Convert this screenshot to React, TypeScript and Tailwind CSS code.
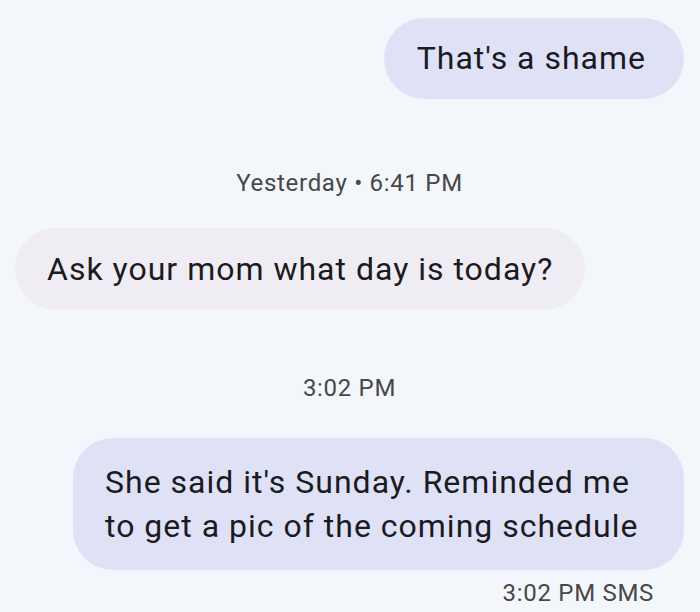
const font = { fontFamily: 'Roboto, "Noto Sans", sans-serif' };

function Stamp({ children, className = '' }: { children: React.ReactNode; className?: string }) {
  return (
    <div className={`text-[24px] leading-[28px] tracking-[0.7px] text-[#474747] ${className}`}>{children}</div>
  );
}

export default function App() {
  return (
    <div style={font} className="w-[700px] h-[612px] bg-[#f3f7fc] overflow-hidden flex flex-col pt-[18px] pl-[15px] pr-[16px] text-[#1b1b1f]">
      <div className="self-end rounded-full bg-[#dfe2f7] pl-[33px] pr-[38px] py-[18px] text-[32px] leading-[45px] tracking-[1px]">
        That's a shame
      </div>

      <Stamp className="self-center mt-[70px]">Yesterday • 6:41 PM</Stamp>

      <div className="self-start mt-[31px] rounded-full bg-[#efedf3] px-[32px] py-[18px] text-[32px] leading-[46px] tracking-[1px]">
        Ask your mom what day is today?
      </div>

      <Stamp className="self-center mt-[64px]">3:02 PM</Stamp>

      <div className="self-end mt-[36px] w-[611px] rounded-[40px] bg-[#dfe2f7] px-[32px] py-[22px] text-[32px] leading-[44px] tracking-[1px]">
        She said it's Sunday. Reminded me to get a pic of the coming schedule
      </div>

      <Stamp className="self-end mt-[9px] mr-[30px]">3:02 PM SMS</Stamp>
    </div>
  );
}
